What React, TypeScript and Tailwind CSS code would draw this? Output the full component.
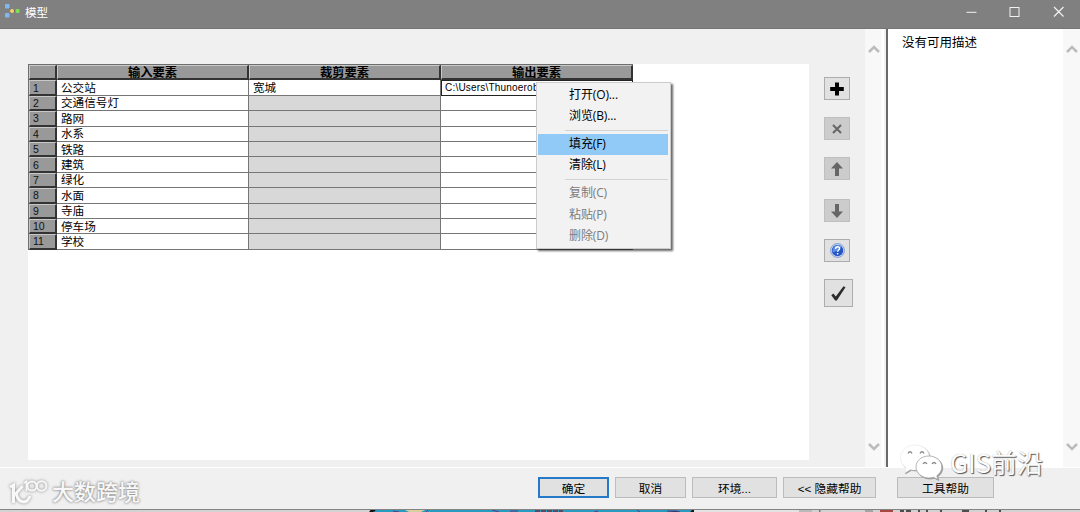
import React from "react";

const inputs = ["公交站", "交通信号灯", "路网", "水系", "铁路", "建筑", "绿化", "水面", "寺庙", "停车场", "学校"];
const headers = ["输入要素", "裁剪要素", "输出要素"];

function TitleBar() {
  return (
    <header className="flex h-[29px] shrink-0 items-start border-b border-[#757575] bg-[#808080]">
      <svg className="ml-[4px] mt-[3px] h-[16px] w-[17px]" viewBox="0 0 17 16">
        <path d="M3 3l5 5M3 13l5-5M8 8h5" stroke="#444" strokeDasharray="1 1" />
        <rect x="1" y="1" width="4.5" height="4.5" rx="1" fill="#7fb9ee" />
        <rect x="1" y="10" width="4.5" height="4.5" rx="1" fill="#7fb9ee" />
        <circle cx="8" cy="8" r="2.1" fill="#f5cf6b" />
        <rect x="11.6" y="6" width="4" height="4" rx="1.2" fill="#7fdc55" />
      </svg>
      <h1 className="ml-[4px] mt-[4px] text-[11.5px] leading-[18px] text-white">模型</h1>
      <svg className="ml-auto mr-[14px] mt-[5px] h-[14px] w-[100px]" viewBox="0 0 100 14" fill="none" stroke="#f2f2f2">
        <path d="M0.5 7.3H10.5" />
        <rect x="44" y="2.5" width="9" height="9" />
        <path d="M88 2l9.5 9.5M97.5 2L88 11.5" strokeWidth="1.2" />
      </svg>
    </header>
  );
}

function GreyCell({ children, center }: { children?: React.ReactNode; center?: boolean }) {
  return (
    <div
      className={
        "flex items-center overflow-hidden border-b-2 border-r-2 border-l border-t border-b-[#333] border-r-[#333] border-l-[#c8c8c8] border-t-[#c8c8c8] bg-[#999999] " +
        (center ? "justify-center" : "pl-[3px]")
      }
    >
      {children}
    </div>
  );
}

function DataTable() {
  return (
    <div className="w-[605px] border-l border-t border-[#6e6e6e]">
      <div className="grid h-[15.4px] grid-cols-[28px_192px_192px_192px]">
        <GreyCell />
        {headers.map((h) => (
          <GreyCell key={h} center>
            <span className="pt-[2px] text-[12.3px] font-bold leading-[14px]">{h}</span>
          </GreyCell>
        ))}
      </div>
      {inputs.map((name, i) => (
        <div key={name} className="grid h-[15.4px] grid-cols-[28px_192px_192px_192px] leading-[14px]">
          <GreyCell>
            <span className="text-[10.5px] leading-[12px] text-[#111]">{i + 1}</span>
          </GreyCell>
          <div className="flex items-center overflow-hidden border-b border-r border-[#767676] bg-white pl-[4px] pt-px text-[11.6px]">{name}</div>
          <div className={"flex items-center overflow-hidden border-b border-r border-[#767676] pl-[4px] pt-px text-[11.6px] " + (i === 0 ? "bg-white" : "bg-[#d8d8d8]")}>
            {i === 0 ? "宽城" : ""}
          </div>
          <div
            className={
              "flex items-center overflow-hidden whitespace-nowrap bg-white text-[10px] tracking-[0.2px] " +
              (i === 0 ? "border border-[#222] pl-[3px]" : "border-b border-r border-[#767676]")
            }
          >
            {i === 0 ? "C:\\Users\\Thunoerobot" : ""}
          </div>
        </div>
      ))}
    </div>
  );
}

function MenuItem({ label, active, disabled }: { label: string; active?: boolean; disabled?: boolean }) {
  return (
    <li
      className={
        "flex h-[21.1px] items-center pl-[31px] text-[12px] leading-none tracking-[-0.12px] [font-family:'Open_Sans','Noto_Sans_CJK_SC',sans-serif] " +
        (active ? "bg-[#91c9f7] " : "") +
        (disabled ? "text-[#7c7c7c]" : "text-black")
      }
    >
      {label}
    </li>
  );
}

function Separator() {
  return <li className="ml-[27px] flex h-[7px] items-center"><span className="h-px w-full bg-[#d3d3d3]" /></li>;
}

function ContextMenu() {
  return (
    <ul className="absolute left-[536px] top-[82px] h-[167px] w-[135px] border border-[#cccccc] bg-[#f2f2f2] px-[2px] pl-px pt-[1.5px] shadow-[2px_2px_2px_rgba(0,0,0,0.6)]">
      <MenuItem label="打开(O)..." />
      <MenuItem label="浏览(B)..." />
      <Separator />
      <MenuItem label="填充(F)" active />
      <MenuItem label="清除(L)" />
      <Separator />
      <MenuItem label="复制(C)" disabled />
      <MenuItem label="粘贴(P)" disabled />
      <MenuItem label="删除(D)" disabled />
    </ul>
  );
}

function ToolButton({ children, className }: { children: React.ReactNode; className: string }) {
  return <button className={"flex items-center justify-center border " + className}>{children}</button>;
}

function ToolColumn() {
  const on = "h-[23px] w-[26px] border-[#adadad] bg-[#e1e1e1] ";
  const off = "h-[23px] w-[26px] border-[#bfbfbf] bg-[#cccccc] ";
  return (
    <div className="ml-[15px] mt-[48px] flex w-[41px] shrink-0 flex-col items-start">
      <ToolButton className={on}>
        <svg className="h-[14px] w-[14px]" viewBox="0 0 14 14"><path d="M7 .5v13M.2 7h13.6" stroke="#000" strokeWidth="4" /></svg>
      </ToolButton>
      <ToolButton className={off + "mt-[17px]"}>
        <svg className="h-[10px] w-[10px]" viewBox="0 0 10 10"><path d="M1 1l8 8M9 1L1 9" stroke="#666" strokeWidth="2" /></svg>
      </ToolButton>
      <ToolButton className={off + "mt-[17px]"}>
        <svg className="h-[14px] w-[12px]" viewBox="0 0 12 14"><path d="M6 0l6 6.500H8V14H4V6.500H0z" fill="#666" /></svg>
      </ToolButton>
      <ToolButton className={off + "mt-[19px]"}>
        <svg className="h-[14px] w-[12px]" viewBox="0 0 12 14"><path d="M6 14L0 7.500h4V0h4v7.500h4z" fill="#666" /></svg>
      </ToolButton>
      <ToolButton className={on + "mt-[17px]"}>
        <svg className="h-[15px] w-[15px] shrink-0" viewBox="0 0 15 15">
          <circle cx="7.5" cy="7.5" r="6.9" fill="#d8e4f8" stroke="#6686c8" strokeWidth=".8" />
          <circle cx="7.5" cy="7.5" r="5.7" fill="#2456c4" />
          <path d="M2.800 9.500C6 9 10 6 11.500 3.500A5.500 5.500 0 0 0 2.800 9.500z" fill="#5c8ce6" />
          <path d="M5.500 6c0-3 4.300-2.800 4.100-.400C9.500 7 7.700 7.200 7.600 8.800M7.600 10v1.500" fill="none" stroke="#fff" strokeWidth="1.4" />
        </svg>
      </ToolButton>
      <ToolButton className="mt-[17px] h-[28px] w-[29px] border-[#adadad] bg-[#e1e1e1]">
        <svg className="h-[15px] w-[15px]" viewBox="0 0 15 15"><path d="M.300 9.300L2.400 7.600l2.400 3L12.500.300l2 .900L5.800 14.500H4.200z" fill="#2c2c2c" /></svg>
      </ToolButton>
    </div>
  );
}

function ScrollBar() {
  return (
    <div className="flex w-[17px] shrink-0 flex-col items-center justify-between bg-[#f8f8f8] pb-[16px] pt-[16px]">
      <svg className="h-[9px] w-[12px]" viewBox="0 0 12 9" fill="none" stroke="#bcbcbc" strokeWidth="2.5"><path d="M1 7l5-5 5 5" /></svg>
      <svg className="h-[9px] w-[12px]" viewBox="0 0 12 9" fill="none" stroke="#bcbcbc" strokeWidth="2.5"><path d="M1 2l5 5 5-5" /></svg>
    </div>
  );
}

function Button({ label, className }: { label: string; className: string }) {
  return (
    <button className={"flex h-[21px] items-center justify-center whitespace-pre bg-[#e1e1e1] pt-[2px] text-[11.7px] leading-none " + className}>
      {label}
    </button>
  );
}

function Footer() {
  return (
    <footer className="flex h-[42px] shrink-0 items-start border-b border-[#848484] pl-[538px] pt-[9px]">
      <Button label="确定" className="w-[71px] border-2 border-[#2479c8]" />
      <Button label="取消" className="ml-[6px] w-[71px] border border-[#bcbcbc]" />
      <Button label="环境..." className="ml-[6px] w-[85px] border border-[#bcbcbc]" />
      <Button label="<< 隐藏帮助" className="ml-[6px] w-[93px] border border-[#bcbcbc]" />
      <Button label="工具帮助" className="ml-[21px] w-[97px] border border-[#bcbcbc]" />
    </footer>
  );
}

function DesktopStrip() {
  return (
    <svg className="h-[2px] w-full shrink-0" viewBox="0 0 1080 2" preserveAspectRatio="none">
      <rect width="1080" height="2" fill="#d2d2d2" />
      <rect x="371" width="323" height="2" fill="#269cc0" />
      <path d="M370 2l5-2h-3zM691 2l3-2h2z" stroke="#111" strokeWidth="2" />
      <path d="M405 0h20l-4 2h-12z" fill="#d8cf9d" />
      <path d="M393 1l6 1M426 2l2-2M492 0l7 2M510 1h8M594 2l4-1M637 0l3 2M667 1h9l4 1" stroke="#5b3b80" />
      <path d="M535 1h28" stroke="#6b3047" strokeWidth="1.5" strokeDasharray="5 1" />
      <rect x="694" width="105" height="2" fill="#e2e2e2" />
      <rect x="799" width="13" height="2" fill="#b9b9b9" />
      <rect x="819" width="1.5" height="2" fill="#777" />
      <path d="M865 1h8" stroke="#777" />
      <rect x="880" width="13" height="2" fill="#a74840" />
      <path d="M900 1h4M906 1h5M918 1h2M926 1h2M940 1h2M962 1h7M985 1h2M1000 0v2" stroke="#222" strokeWidth="1.5" />
    </svg>
  );
}

function CornerMark() {
  return (
    <div className="absolute left-[8px] top-[477px] flex h-[32px] items-center">
      <svg className="h-[30px] w-[42px] drop-shadow-[0_0_1.5px_#888]" viewBox="0 0 42 30" fill="none" stroke="#f8f8f8" strokeWidth="3">
        <path d="M2 9l3.500-2V25M14.500 8L8 15.500M8 14C9 24 18 28 22 18" />
        <path d="M16 5l2.500-1.500V13" strokeWidth="2" />
        <circle cx="24" cy="8" r="4.600" strokeWidth="2" />
        <circle cx="33.600" cy="8" r="4.800" strokeWidth="2" />
      </svg>
      <span className="ml-[2px] text-[22px] font-medium leading-none text-[#f8f8f8] [text-shadow:0_0_3px_#888,0_0_2px_#999]">大数跨境</span>
    </div>
  );
}

function ChannelMark() {
  return (
    <div className="absolute left-[899px] top-[444px] flex items-center">
      <svg className="h-[36px] w-[45px] drop-shadow-[1px_1px_0.5px_#999]" viewBox="0 0 45 36">
        <path d="M16 1C7.500 1 1.500 7 1.500 14c0 4 2 7.500 5.200 9.500L5.500 29l6-3.500c2 .500 4 .700 6 .500C27 26 31 19 30.500 13 30 6 24 1 16 1z" fill="#fff" stroke="#e2e2e2" strokeWidth=".5" />
        <path d="M30 12c-8 0-13 5-13 11s6 11 13 11c1.500 0 3-.300 4.500-.700l4.500 2.200-1.200-3.700c3-2.200 5-5.200 5-8.800C42.800 17 37 12 30 12z" fill="#fff" stroke="#999" strokeWidth=".7" />
        <path d="M9 9.500q2-3.500 4 0M21 9.500q2-3.500 4 0M24 20q2-3 4 0M33 20q2-3 4 0" fill="none" stroke="#888" strokeWidth="1.3" />
      </svg>
      <span className="ml-[6px] text-[26px] leading-none text-[#fcfcfc] [font-family:'Noto_Sans_CJK_SC',sans-serif] [text-shadow:1px_1px_1px_#555,0_0_1px_#aaa]">GIS前沿</span>
    </div>
  );
}

export default function App() {
  return (
    <div className="relative flex h-[512px] w-[1080px] flex-col overflow-hidden bg-[#f0f0f0] text-black [font-family:'Liberation_Sans','Noto_Sans_CJK_SC',sans-serif]">
      <TitleBar />
      <main className="flex h-[439px] shrink-0 border-b border-white">
        <section className="flex w-[882px] shrink-0">
          <div className="ml-[28px] mt-[35px] h-[396px] w-[781px] shrink-0 bg-white">
            <DataTable />
          </div>
          <ToolColumn />
          <ScrollBar />
        </section>
        <div className="w-[4px] border-l-2 border-white bg-[#f0f0f0]" />
        <aside className="flex flex-1 border-l-2 border-[#686868] bg-white">
          <p className="flex-1 pl-[14px] pt-[5px] text-[12.5px] leading-[18px]">没有可用描述</p>
          <ScrollBar />
        </aside>
      </main>
      <Footer />
      <DesktopStrip />
      <ContextMenu />
      <CornerMark />
      <ChannelMark />
    </div>
  );
}
